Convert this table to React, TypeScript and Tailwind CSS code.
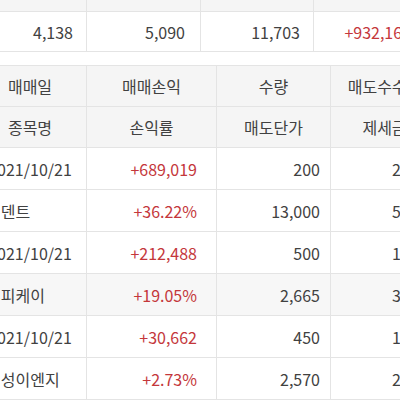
import type React from "react"

type Trade = {
    date: string
    name: string
    profit: string
    rate: string
    qty: string
    price: string
    fee: string
    tax: string
    highlight?: boolean
}

const trades: Trade[] = [
    { date: "2021/10/21", name: "이덴트", profit: "+689,019", rate: "+36.22%", qty: "200", price: "13,000", fee: "2,930", tax: "5,980" },
    { date: "2021/10/21", name: "지피케이", profit: "+212,488", rate: "+19.05%", qty: "500", price: "2,665", fee: "1,150", tax: "3,060", highlight: true },
    { date: "2021/10/21", name: "신성이엔지", profit: "+30,662", rate: "+2.73%", qty: "450", price: "2,570", fee: "1,170", tax: "2,660" },
]

const font = { fontFamily: '"Noto Sans CJK KR", "Noto Sans", sans-serif' }

const App: React.FC = () => {
    return (
        <div className="w-[400px] h-[400px] overflow-hidden bg-white text-[16px] text-[#414141]" style={font}>
            {/* summary table */}
            <div className="grid grid-cols-[86px_114px_113px_107px] border-b border-[#e4e4e4]">
                <div className="h-[12px] bg-[#f5f5f5] border-b border-[#e4e4e4]"></div>
                <div className="h-[12px] bg-[#f5f5f5] border-b border-l border-[#e4e4e4]"></div>
                <div className="h-[12px] bg-[#f5f5f5] border-b border-l border-[#e4e4e4]"></div>
                <div className="h-[12px] bg-[#f5f5f5] border-b border-l border-[#e4e4e4]"></div>
                <div className="h-[39px] flex items-center justify-end pr-[13px]">4,138</div>
                <div className="h-[39px] flex items-center justify-end pr-[15px] border-l border-[#e4e4e4]">5,090</div>
                <div className="h-[39px] flex items-center justify-end pr-[13px] border-l border-[#e4e4e4]">11,703</div>
                <div className="h-[39px] flex items-center justify-end pr-[9px] border-l border-[#e4e4e4] text-[#c4373b]">+932,169</div>
            </div>

            {/* trade table */}
            <div className="mt-[13px] -ml-[26px] w-[460px] grid grid-cols-[112px_130px_114px_108px] border-t border-[#e4e4e4]">
                <div className="h-[41px] bg-[#f5f5f5] border-b border-[#e4e4e4] flex items-center justify-center">매매일</div>
                <div className="h-[41px] bg-[#f5f5f5] border-b border-l border-[#e4e4e4] flex items-center justify-center">매매손익</div>
                <div className="h-[41px] bg-[#f5f5f5] border-b border-l border-[#e4e4e4] flex items-center justify-center">수량</div>
                <div className="h-[41px] bg-[#f5f5f5] border-b border-l border-[#e4e4e4] flex items-center justify-center">매도수수료</div>
                <div className="h-[41px] bg-[#f5f5f5] border-b border-[#e4e4e4] flex items-center justify-center">종목명</div>
                <div className="h-[41px] bg-[#f5f5f5] border-b border-l border-[#e4e4e4] flex items-center justify-center">손익률</div>
                <div className="h-[41px] bg-[#f5f5f5] border-b border-l border-[#e4e4e4] flex items-center justify-center">매도단가</div>
                <div className="h-[41px] bg-[#f5f5f5] border-b border-l border-[#e4e4e4] flex items-center justify-center">제세금</div>

                {trades.map((t) => {
                    const bg = t.highlight ? "bg-[#f7f7f7]" : "bg-white"
                    return [
                        <div key={t.name + "d"} className="h-[42px] border-b border-[#e4e4e4] flex items-center justify-center">{t.date}</div>,
                        <div key={t.name + "p"} className="h-[42px] border-b border-l border-[#e4e4e4] flex items-center justify-end pr-[19px] text-[#c4373b]">{t.profit}</div>,
                        <div key={t.name + "q"} className="h-[42px] border-b border-l border-[#e4e4e4] flex items-center justify-end pr-[10px]">{t.qty}</div>,
                        <div key={t.name + "f"} className="h-[42px] border-b border-l border-[#e4e4e4] flex items-center justify-end pr-[6px]">{t.fee}</div>,
                        <div key={t.name + "n"} className={`h-[42px] border-b border-[#e4e4e4] flex items-center justify-start pl-[12px] ${bg}`}>{t.name}</div>,
                        <div key={t.name + "r"} className={`h-[42px] border-b border-l border-[#e4e4e4] flex items-center justify-end pr-[19px] text-[#c4373b] ${bg}`}>{t.rate}</div>,
                        <div key={t.name + "pr"} className={`h-[42px] border-b border-l border-[#e4e4e4] flex items-center justify-end pr-[10px] ${bg}`}>{t.price}</div>,
                        <div key={t.name + "t"} className={`h-[42px] border-b border-l border-[#e4e4e4] flex items-center justify-end pr-[6px] ${bg}`}>{t.tax}</div>,
                    ]
                })}
            </div>
        </div>
    )
}

export default App
